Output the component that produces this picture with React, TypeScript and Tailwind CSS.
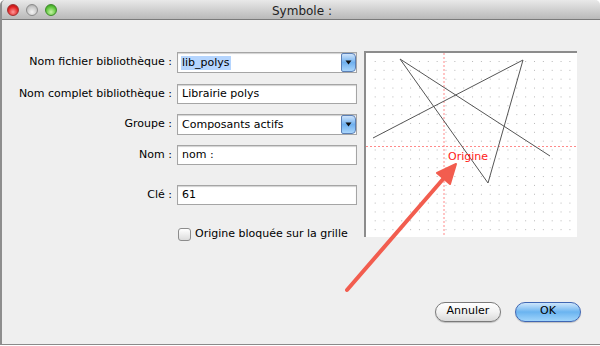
import React from "react";

const font = { fontFamily: '"DejaVu Sans", "Liberation Sans", sans-serif' };

function Field({ value, select, highlight }: { value: string; select?: boolean; highlight?: boolean }) {
  return (
    <div
      className={`relative flex w-[180px] items-center border border-[#a5a5a5] bg-white pl-[3px] shadow-[inset_0_1px_1px_rgba(0,0,0,0.18)] ${select ? "h-[21px]" : "h-[20px]"}`}
    >
      <span className={`text-[11px] leading-[14px] text-black ${highlight ? "bg-[#b5d5fe] px-[1px]" : "px-[1px]"}`}>{value}</span>
      {select && (
        <div className="absolute right-[0px] top-[0px] flex h-[19px] w-[15px] items-center justify-center rounded-r-[4px] rounded-l-[2px] border border-[#5b7fb5] bg-gradient-to-b from-[#cfe4fb] via-[#6fb0ee] to-[#a9d5fb]">
          <svg width="7" height="5" viewBox="0 0 7 5">
            <path d="M0.5 0.5 L6.5 0.5 L3.5 4.5 Z" fill="#111" />
          </svg>
        </div>
      )}
    </div>
  );
}

function Row({ label, children, mt }: { label: string; children: React.ReactNode; mt: string }) {
  return (
    <div className={`flex items-center ${mt}`}>
      <div className="w-[173px] pr-[1px] text-right text-[11px] text-black">{label}</div>
      <div className="ml-[4px]">{children}</div>
    </div>
  );
}

function Preview() {
  const dots: React.ReactNode[] = [];
  for (let x = 8.7; x < 212; x += 8.85) {
    for (let y = 8; y < 184; y += 8.85) {
      dots.push(<rect key={`${x}-${y}`} x={x} y={y} width="1" height="1" fill="#b8b8b8" />);
    }
  }
  return (
    <div className="relative h-[186px] w-[213px] border-l-2 border-t-2 border-l-[#8c8c8c] border-t-[#8c8c8c] bg-white">
      <svg width="211" height="184" viewBox="0 0 211 184" className="absolute left-0 top-0">
        {dots}
        <line x1="78" y1="0" x2="78" y2="184" stroke="#ff8a8a" strokeWidth="1" strokeDasharray="2 2" />
        <line x1="0" y1="93.5" x2="211" y2="93.5" stroke="#ff8a8a" strokeWidth="1" strokeDasharray="2 2" />
        <polyline
          points="184,103 34,6 122,130 157,7 7,85"
          fill="none"
          stroke="#555"
          strokeWidth="1"
        />
        <text x="82" y="107" fill="#ff1a1a" fontSize="11" style={font}>
          Origine
        </text>
      </svg>
    </div>
  );
}

export default function App() {
  return (
    <div className="relative h-[346px] w-[600px] overflow-hidden bg-white" style={font}>
      <div className="flex h-[345px] flex-col overflow-hidden rounded-t-[5px] border-b border-l-2 border-[#8e8e8e] border-b-[#8a8a8a] bg-[#efefef]">
        {/* Title bar */}
        <div className="relative flex h-[20px] shrink-0 items-center border-b border-[#7a7a7a] bg-gradient-to-b from-[#e9e9e9] to-[#b9b9b9]">
          <div className="ml-[5px] flex gap-[7px]">
            <div className="h-[12px] w-[12px] rounded-full border border-[#a03030] bg-[radial-gradient(circle_at_50%_70%,#ff9a9a,#e02020_60%,#a01010)]" />
            <div className="h-[12px] w-[12px] rounded-full border border-[#8a8a8a] bg-[radial-gradient(circle_at_50%_70%,#f4f4f4,#c8c8c8_60%,#9a9a9a)]" />
            <div className="h-[12px] w-[12px] rounded-full border border-[#3e8a2a] bg-[radial-gradient(circle_at_50%_70%,#c8f5a8,#5cc43a_60%,#2e8a1a)]" />
          </div>
          <div className="absolute left-[270px] top-[2px] text-[12px] text-[#222]">Symbole :</div>
        </div>

        {/* Body */}
        <div className="flex pt-[31px]">
          <div className="flex w-[355px] flex-col">
            <Row label="Nom fichier bibliothèque :" mt="mt-[1px]">
              <Field value="lib_polys" select highlight />
            </Row>
            <Row label="Nom complet bibliothèque :" mt="mt-[11px]">
              <Field value="Librairie polys" />
            </Row>
            <Row label="Groupe :" mt="mt-[10px]">
              <Field value="Composants actifs" select />
            </Row>
            <Row label="Nom :" mt="mt-[10px]">
              <Field value="nom :" />
            </Row>
            <Row label="Clé :" mt="mt-[20px]">
              <Field value="61" />
            </Row>
            <div className="ml-[176px] mt-[21px] flex items-center gap-[4px]">
              <div className="h-[13px] w-[13px] rounded-[3px] border border-[#8c8c8c] bg-gradient-to-b from-white to-[#dcdcdc]" />
              <span className="text-[11px] text-black">Origine bloquée sur la grille</span>
            </div>
          </div>
          <div className="ml-[7px]">
            <Preview />
          </div>
        </div>

        {/* Buttons */}
        <div className="mt-[59px] flex justify-end gap-[14px] pr-[19px]">
          <div className="flex h-[20px] w-[66px] items-center justify-center rounded-full border border-[#7a7a7a] bg-gradient-to-b from-white via-[#f2f2f2] to-[#dadada] text-[11px] text-black shadow-[0_1px_1px_rgba(0,0,0,0.2)]">
            Annuler
          </div>
          <div className="flex h-[20px] w-[66px] items-center justify-center rounded-full border border-[#3f66b3] bg-gradient-to-b from-[#cde6fb] via-[#6ab4f0] to-[#9fd4fb] text-[11px] text-black shadow-[0_1px_1px_rgba(0,0,0,0.2)]">
            OK
          </div>
        </div>
      </div>

      {/* Red annotation arrow */}
      <svg className="pointer-events-none absolute left-0 top-0" width="600" height="346" viewBox="0 0 600 346">
        <line x1="347" y1="290" x2="444" y2="178" stroke="#f25d4f" strokeWidth="4" strokeLinecap="round" />
        <polygon points="456,164 437,173 450,184" fill="#f25d4f" stroke="#f25d4f" strokeWidth="2" strokeLinejoin="round" />
      </svg>
    </div>
  );
}
